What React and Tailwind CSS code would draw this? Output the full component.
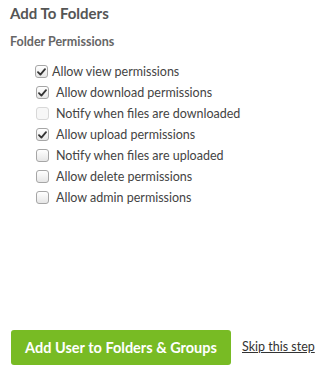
import { useState } from "react"

const permisos = [
  { id: "view", label: "Allow view permissions", checked: true, tight: true },
  { id: "download", label: "Allow download permissions", checked: true },
  { id: "notifyDown", label: "Notify when files are downloaded", checked: false, disabled: true },
  { id: "upload", label: "Allow upload permissions", checked: true },
  { id: "notifyUp", label: "Notify when files are uploaded", checked: false },
  { id: "delete", label: "Allow delete permissions", checked: false },
  { id: "admin", label: "Allow admin permissions", checked: false },
]

// Checkbox con estilo de navegador antiguo
function Casilla({ checked, disabled }) {
  return (
    <span
      className={`flex h-[13px] w-[13px] shrink-0 items-center justify-center rounded-[3px] border ${
        disabled
          ? "border-[#d8d8d8] bg-[#f7f7f7]"
          : "border-[#a6a6a6] bg-gradient-to-b from-[#ffffff] to-[#e6e6e6]"
      }`}
    >
      {checked && (
        <svg width="9" height="8" viewBox="0 0 9 8">
          <path
            d="M1 4.2 L3.4 6.6 L8 1.2"
            fill="none"
            stroke="#333"
            strokeWidth="1.8"
            strokeLinecap="round"
            strokeLinejoin="round"
          />
        </svg>
      )}
    </span>
  )
}

export default function App() {
  const [valores, setValores] = useState(
    Object.fromEntries(permisos.map((p) => [p.id, p.checked]))
  )

  return (
    <div
      className="flex h-[375px] w-[329px] flex-col bg-white px-[10px] text-[#555]"
      style={{ fontFamily: 'Lato, "Noto Sans", sans-serif' }}
    >
      <h1 className="mt-[3px] text-[15px] font-bold leading-[20px] text-[#555]">
        Add To Folders
      </h1>
      <h2 className="mt-[11px] text-[12.5px] font-bold leading-[16px] text-[#666]">
        Folder Permissions
      </h2>

      <ul className="mt-[11px] flex flex-col pl-[25px]">
        {permisos.map((p) => (
          <li key={p.id} className="flex h-[21px] items-center">
            <button
              type="button"
              disabled={p.disabled}
              onClick={() => setValores((v) => ({ ...v, [p.id]: !v[p.id] }))}
              className={`flex items-center ${p.tight ? "" : "pl-px"}`}
            >
              <Casilla checked={valores[p.id]} disabled={p.disabled} />
            </button>
            <span
              className={`text-[12.5px] leading-[16px] text-[#444] ${
                p.tight ? "ml-[4px]" : "ml-[7px]"
              }`}
            >
              {p.label}
            </span>
          </li>
        ))}
      </ul>

      <div className="mt-auto mb-[10px] flex items-center gap-[11px] pl-px">
        <button
          type="button"
          className="h-[35px] w-[220px] rounded-[3px] bg-[#78bb24] text-center text-[14.5px] font-bold text-white"
        >
          Add User to Folders &amp; Groups
        </button>
        <a href="#" className="whitespace-nowrap text-[12.5px] text-[#333] underline">
          Skip this step
        </a>
      </div>
    </div>
  )
}
